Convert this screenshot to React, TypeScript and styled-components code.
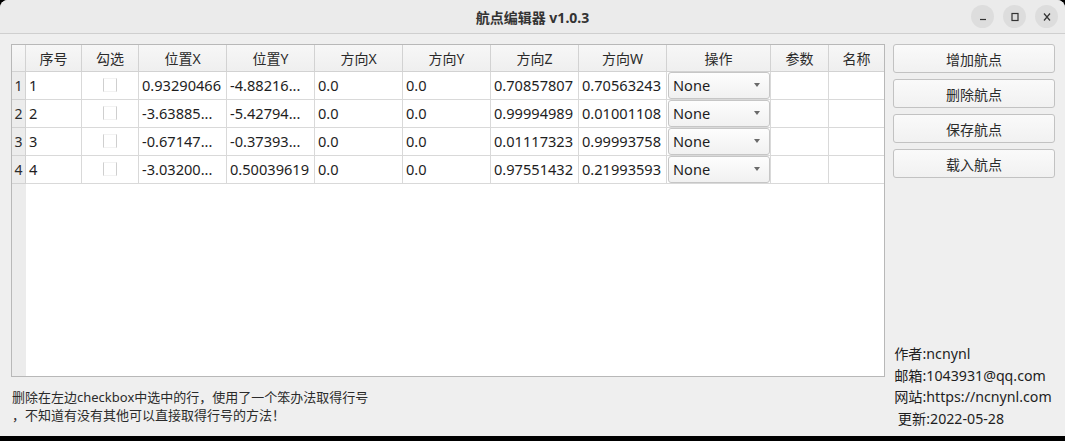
import React from "react";
import styled, { createGlobalStyle } from "styled-components";

const Global = createGlobalStyle`
  html, body { margin: 0; padding: 0; background: #000; }
  body { font-family: "Noto Sans", "Noto Sans CJK SC", sans-serif; }
  * { box-sizing: border-box; }
`;

const FONT = `"Noto Sans", "Noto Sans CJK SC", sans-serif`;

const Window = styled.div`
  width: 1065px;
  height: 436px;
  background: #efefef;
  display: flex;
  flex-direction: column;
  border-radius: 8px 8px 0 0;
  overflow: hidden;
  font-family: ${FONT};
  color: #2b2b2b;
`;

const TitleBar = styled.div`
  height: 34px;
  flex: none;
  background: #ebebeb;
  border-bottom: 1px solid #cfcfcf;
  display: flex;
  align-items: center;
  justify-content: center;
  position: relative;
`;

const Title = styled.div`
  font-size: 14px;
  font-weight: 700;
  color: #333;
`;

const Controls = styled.div`
  position: absolute;
  right: 7px;
  top: 5px;
  display: flex;
  gap: 9px;
`;

const CtrlBtn = styled.div`
  width: 23px;
  height: 23px;
  border-radius: 50%;
  background: #dddddd;
  display: flex;
  align-items: center;
  justify-content: center;
`;

const Main = styled.div`
  flex: 1;
  display: flex;
  gap: 8px;
  padding: 10px 10px 7px 11px;
  min-height: 0;
`;

const LeftCol = styled.div`
  width: 875px;
  display: flex;
  flex-direction: column;
`;

const TableFrame = styled.div`
  height: 333px;
  border: 1px solid #b8b8b8;
  background: #fff;
  display: flex;
  flex-direction: column;
`;

const COLS = "14px 56px 57px 88px 88px 88px 88px 88px 88px 104px 58px 1fr";

const HeaderRow = styled.div`
  display: grid;
  grid-template-columns: ${COLS};
  height: 27px;
  flex: none;
`;

const HeadCell = styled.div`
  background: linear-gradient(#f7f7f7, #efefef);
  border-right: 1px solid #d2d2d2;
  border-bottom: 1px solid #d2d2d2;
  font-size: 14px;
  color: #2b2b2b;
  display: flex;
  align-items: center;
  justify-content: center;
  padding-bottom: 1px;
  &:last-child { border-right: none; }
`;

const Row = styled.div`
  display: grid;
  grid-template-columns: ${COLS};
  height: 28px;
  flex: none;
`;

const RowHead = styled.div`
  background: #ececec;
  border-right: 1px solid #d2d2d2;
  border-bottom: 1px solid #d2d2d2;
  font-size: 14px;
  display: flex;
  align-items: center;
  justify-content: center;
  padding-bottom: 1px;
  color: #2b2b2b;
`;

const Cell = styled.div<{ $center?: boolean }>`
  border-right: 1px solid #d9d9d9;
  border-bottom: 1px solid #d9d9d9;
  font-size: 14.6px;
  padding-left: 3px;
  padding-bottom: 1px;
  display: flex;
  align-items: center;
  justify-content: ${(p) => (p.$center ? "center" : "flex-start")};
  white-space: nowrap;
  overflow: hidden;
  color: #1e1e1e;
  &:last-child { border-right: none; }
`;

const CheckBox = styled.div`
  width: 14px;
  height: 14px;
  border-left: 1px solid #cfcfcf;
  border-right: 1px solid #cfcfcf;
  border-top: 1px solid #f2f2f2;
  border-bottom: 1px solid #f2f2f2;
  margin-left: -3px;
`;

const ComboCell = styled.div`
  border-right: 1px solid #d9d9d9;
  border-bottom: 1px solid #d9d9d9;
  padding: 0 0 0 1px;
  display: flex;
`;

const Combo = styled.div`
  flex: 1;
  border: 1px solid #c6c6c6;
  border-radius: 3px;
  background: linear-gradient(#fdfdfd, #f1f1f1);
  display: flex;
  align-items: center;
  justify-content: space-between;
  padding: 0 9px 1px 4px;
  font-size: 14.6px;
  color: #1e1e1e;
`;

const Arrow = styled.div`
  width: 0;
  height: 0;
  border-left: 3.5px solid transparent;
  border-right: 3.5px solid transparent;
  border-top: 4px solid #6a6a6a;
`;

const Filler = styled.div`
  flex: 1;
  display: grid;
  grid-template-columns: 14px 1fr;
`;

const FillerHead = styled.div`
  background: #ececec;
`;

const Notes = styled.div`
  margin-top: 11px;
  padding-left: 1px;
  font-size: 13px;
  line-height: 18px;
  color: #2b2b2b;
`;

const RightCol = styled.div`
  width: 162px;
  display: flex;
  flex-direction: column;
  justify-content: space-between;
`;

const Buttons = styled.div`
  display: flex;
  flex-direction: column;
  gap: 6px;
`;

const Button = styled.div`
  height: 29px;
  border: 1px solid #c2c2c2;
  border-radius: 3px;
  background: linear-gradient(#fafafa, #f1f1f1);
  display: flex;
  align-items: center;
  justify-content: center;
  font-size: 14px;
  color: #2b2b2b;
`;

const Info = styled.div`
  font-size: 14.2px;
  line-height: 21.4px;
  color: #1e1e1e;
  padding-left: 1px;
  white-space: pre;
`;

const headers = ["序号", "勾选", "位置X", "位置Y", "方向X", "方向Y", "方向Z", "方向W", "操作", "参数", "名称"];

const rows = [
  ["1", "0.93290466", "-4.88216...", "0.0", "0.0", "0.70857807", "0.70563243"],
  ["2", "-3.63885...", "-5.42794...", "0.0", "0.0", "0.99994989", "0.01001108"],
  ["3", "-0.67147...", "-0.37393...", "0.0", "0.0", "0.01117323", "0.99993758"],
  ["4", "-3.03200...", "0.50039619", "0.0", "0.0", "0.97551432", "0.21993593"],
];

export default function App() {
  return (
    <>
      <Global />
      <Window>
        <TitleBar>
          <Title>航点编辑器 v1.0.3</Title>
          <Controls>
            <CtrlBtn>
              <svg width="10" height="10" viewBox="0 0 10 10">
                <line x1="2" y1="7.5" x2="8" y2="7.5" stroke="#333" strokeWidth="1.2" />
              </svg>
            </CtrlBtn>
            <CtrlBtn>
              <svg width="10" height="10" viewBox="0 0 10 10">
                <rect x="2" y="1.5" width="6" height="7" fill="none" stroke="#333" strokeWidth="1.2" />
              </svg>
            </CtrlBtn>
            <CtrlBtn>
              <svg width="10" height="10" viewBox="0 0 10 10">
                <path d="M2 1.5 L8 8.5 M8 1.5 L2 8.5" stroke="#333" strokeWidth="1.2" />
              </svg>
            </CtrlBtn>
          </Controls>
        </TitleBar>
        <Main>
          <LeftCol>
            <TableFrame>
              <HeaderRow>
                <HeadCell />
                {headers.map((h) => (
                  <HeadCell key={h}>{h}</HeadCell>
                ))}
              </HeaderRow>
              {rows.map((r) => (
                <Row key={r[0]}>
                  <RowHead>{r[0]}</RowHead>
                  <Cell>{r[0]}</Cell>
                  <Cell $center>
                    <CheckBox />
                  </Cell>
                  {r.slice(1).map((v, i) => (
                    <Cell key={i}>{v}</Cell>
                  ))}
                  <ComboCell>
                    <Combo>
                      <span>None</span>
                      <Arrow />
                    </Combo>
                  </ComboCell>
                  <Cell />
                  <Cell />
                </Row>
              ))}
              <Filler>
                <FillerHead />
                <div />
              </Filler>
            </TableFrame>
            <Notes>
              <div>删除在左边checkbox中选中的行，使用了一个笨办法取得行号</div>
              <div>，不知道有没有其他可以直接取得行号的方法！</div>
            </Notes>
          </LeftCol>
          <RightCol>
            <Buttons>
              <Button>增加航点</Button>
              <Button>删除航点</Button>
              <Button>保存航点</Button>
              <Button>载入航点</Button>
            </Buttons>
            <Info>
              <div>作者:ncnynl</div>
              <div>邮箱:1043931@qq.com</div>
              <div>网站:https://ncnynl.com</div>
              <div> 更新:2022-05-28</div>
            </Info>
          </RightCol>
        </Main>
      </Window>
    </>
  );
}
